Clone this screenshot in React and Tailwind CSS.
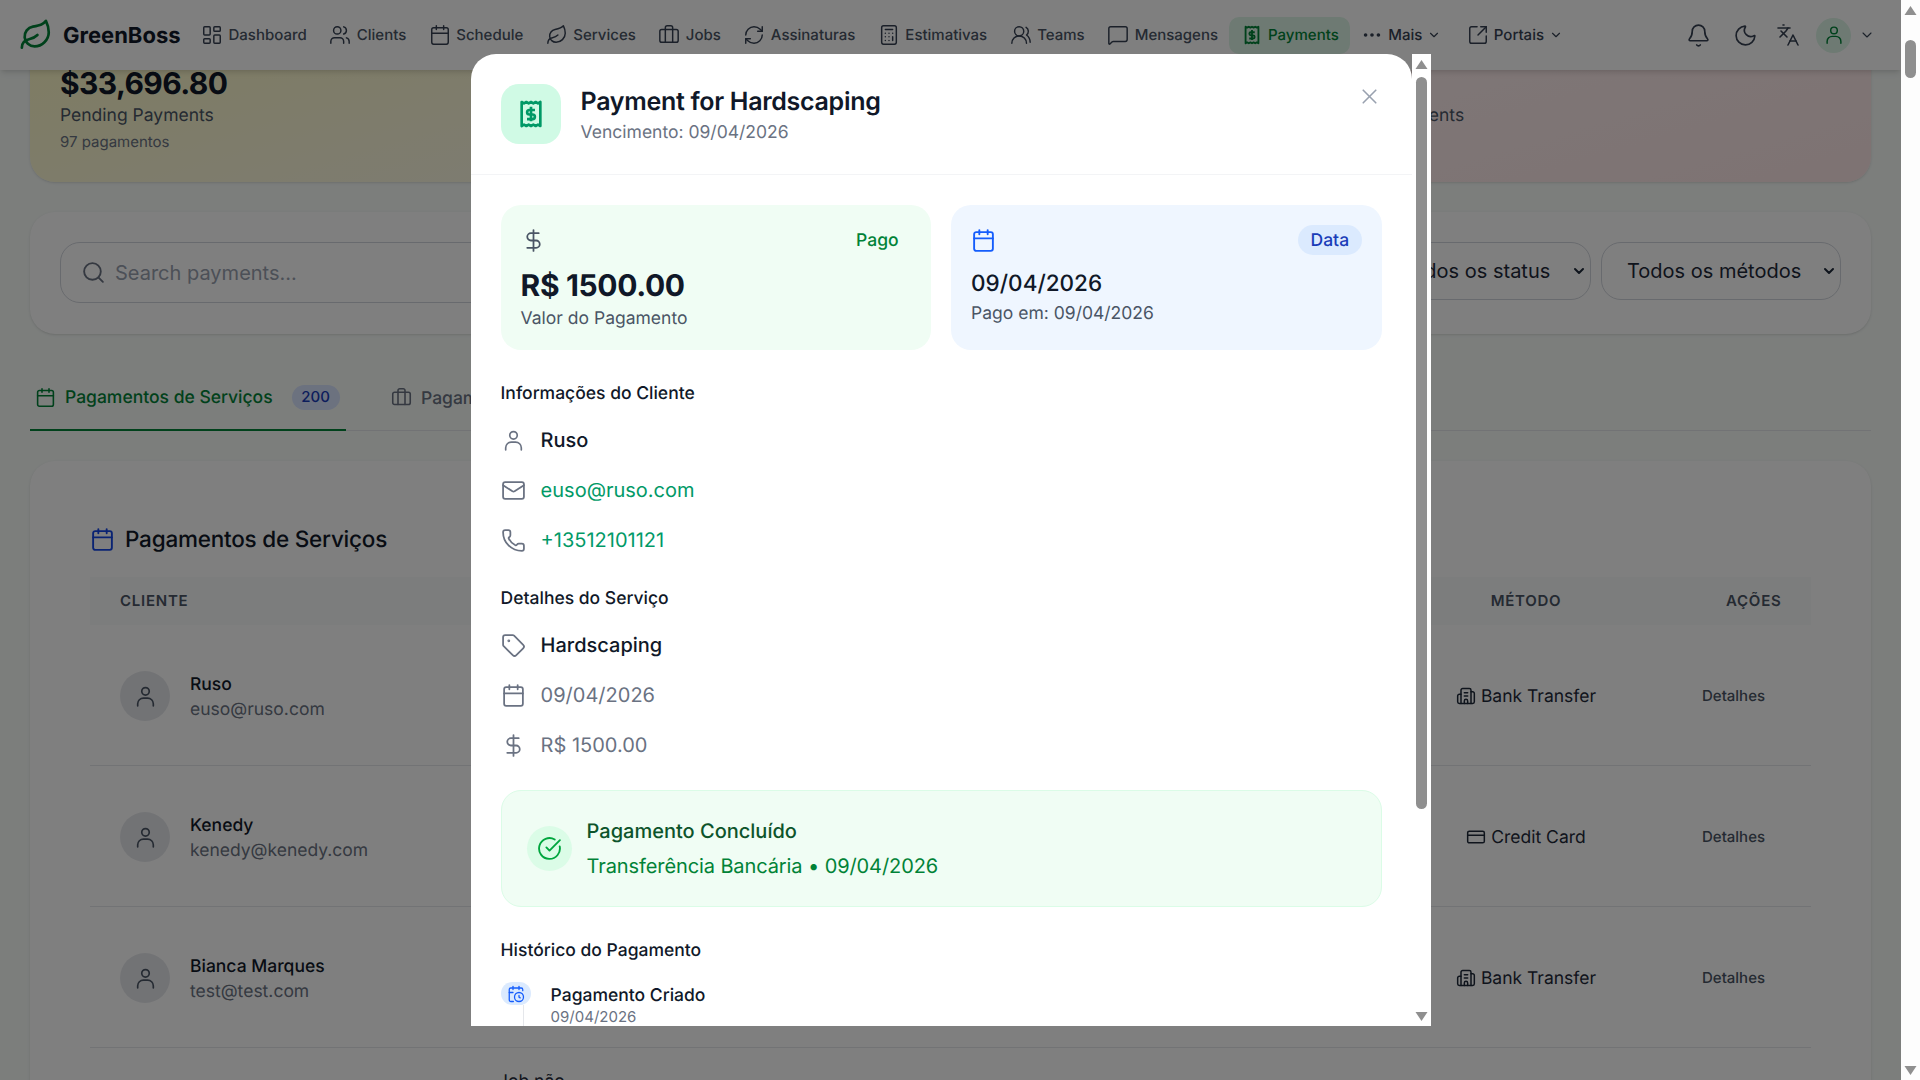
import React from "react";
import {
  Bell,
  Briefcase,
  Building2,
  Calculator,
  Calendar,
  CalendarClock,
  ChevronDown,
  CircleCheckBig,
  CreditCard,
  DollarSign,
  Ellipsis,
  Languages,
  LayoutDashboard,
  Leaf,
  Mail,
  MessageSquare,
  Moon,
  Phone,
  RefreshCw,
  Search,
  SquareArrowOutUpRight,
  Tag,
  Users,
  UsersRound,
  X,
} from "lucide-react";

const PersonIcon = ({ className }) => (
  <svg viewBox="0 0 24 24" fill="none" stroke="currentColor" strokeWidth="1.6" strokeLinecap="round" className={className}>
    <circle cx="12" cy="7" r="3.6" />
    <path d="M4.5 21v-2a5.5 5.5 0 0 1 5.5-5.5h4a5.5 5.5 0 0 1 5.5 5.5v2" />
  </svg>
);

const ReceiptIcon = ({ className }) => (
  <svg viewBox="0 0 24 24" fill="none" stroke="currentColor" className={className}>
    <path
      strokeWidth="2"
      strokeLinejoin="round"
      d="M5 3l1.75 1L8.5 3l1.75 1L12 3l1.75 1L15.5 3l1.75 1L19 3v18l-1.75-1-1.75 1-1.75-1L12 21l-1.75-1-1.75 1-1.75-1L5 21z"
    />
    <path strokeWidth="2" d="M12 6.5v11M15 9h-4.2a1.7 1.7 0 0 0 0 3.4h2.4a1.7 1.7 0 0 1 0 3.4H9" />
  </svg>
);

const navItems = [
  { label: "Dashboard", Icon: LayoutDashboard },
  { label: "Clients", Icon: Users },
  { label: "Schedule", Icon: Calendar },
  { label: "Services", Icon: Leaf },
  { label: "Jobs", Icon: Briefcase },
  { label: "Assinaturas", Icon: RefreshCw },
  { label: "Estimativas", Icon: Calculator },
  { label: "Teams", Icon: UsersRound },
  { label: "Mensagens", Icon: MessageSquare },
];

const rows = [
  { name: "Ruso", email: "euso@ruso.com", method: "Bank Transfer", Icon: Building2 },
  { name: "Kenedy", email: "kenedy@kenedy.com", method: "Credit Card", Icon: CreditCard },
  { name: "Bianca Marques", email: "test@test.com", method: "Bank Transfer", Icon: Building2 },
];

const Navbar = () => (
  <header className="relative z-10 flex h-[70px] items-center bg-white pl-[19px] shadow-md">
    <Leaf className="h-[34px] w-[34px] text-green-700" strokeWidth={1.9} />
    <span className="ml-[10px] mr-[9.25px] pt-[2px] text-[22px] font-bold text-gray-900">GreenBoss</span>
    <nav className="flex items-center">
      {navItems.map(({ label, Icon }) => (
        <a key={label} className="flex h-[37px] items-center gap-[5.5px] px-[11.25px] text-[15px] font-medium text-gray-600">
          <Icon className="h-[22px] w-[22px] text-gray-700" strokeWidth={1.6} />
          {label}
        </a>
      ))}
      <a className="flex h-[37px] items-center gap-[5.5px] rounded-[10px] bg-[#dcf5e6] px-[11.25px] text-[15px] font-medium text-green-700">
        <ReceiptIcon className="h-[22px] w-[22px]" />
        Payments
      </a>
      <a className="flex h-[37px] items-center gap-[5px] px-[11.25px] text-[15px] font-medium text-gray-700">
        <Ellipsis className="h-[22px] w-[22px]" strokeWidth={2} />
        Mais
        <ChevronDown className="h-[14px] w-[14px]" />
      </a>
      <a className="ml-[3px] flex h-[37px] items-center gap-[5px] px-[11.25px] text-[15px] font-medium text-gray-700">
        <SquareArrowOutUpRight className="h-[22px] w-[22px]" strokeWidth={1.6} />
        Portais
        <ChevronDown className="h-[14px] w-[14px]" />
      </a>
    </nav>
    <div className="ml-auto flex items-center pr-[26px] text-gray-700">
      <Bell className="h-[25px] w-[25px]" strokeWidth={1.6} />
      <Moon className="ml-[22px] h-[25px] w-[25px]" strokeWidth={1.6} />
      <Languages className="ml-[18.5px] h-[24px] w-[24px]" strokeWidth={1.6} />
      <span className="ml-[16px] flex h-[35px] w-[35px] items-center justify-center rounded-full bg-[#dcf5e6] text-green-700">
        <PersonIcon className="h-[22px] w-[22px]" />
      </span>
      <ChevronDown className="ml-[8px] h-[16px] w-[16px]" strokeWidth={1.6} />
    </div>
  </header>
);

const StatCard = ({ value, label, note, tone }) => (
  <div className={`flex h-[172px] flex-col justify-end rounded-[25px] px-[30px] pb-[29px] shadow-sm ${tone}`}>
    <div className="text-[30px] font-bold leading-[36px] tracking-[-0.6px] text-gray-900">{value}</div>
    <div className="mt-[1px] text-[17.5px] leading-[26px] text-gray-600">{label}</div>
    <div className="mt-[2px] text-[15px] leading-[22px] text-gray-500">{note}</div>
  </div>
);

const PaymentsTable = () => (
  <section className="mt-[30px] rounded-[25px] bg-white px-[60px] pt-[64px] shadow-sm">
    <div className="flex items-center gap-[10px]">
      <Calendar className="-mt-[1px] h-[25px] w-[25px] text-blue-700" strokeWidth={1.8} />
      <h2 className="text-[22.5px] font-medium leading-[30px] tracking-[-0.22px] text-gray-900">Pagamentos de Serviços</h2>
    </div>
    <div className="mt-[22px] grid h-[48px] grid-cols-[380px_1fr_222px_174px] items-center bg-gray-50 text-[15px] font-semibold tracking-wider text-gray-600">
      <span className="pl-[30px]">CLIENTE</span>
      <span />
      <span className="text-center">MÉTODO</span>
      <span className="pl-[89px]">AÇÕES</span>
    </div>
    {rows.map(({ name, email, method, Icon }) => (
      <div key={name} className="grid h-[141px] grid-cols-[380px_1fr_222px_174px] items-center border-b border-gray-200 pt-[2px]">
        <div className="flex items-center gap-[20px] pl-[30px]">
          <span className="flex h-[50px] w-[50px] items-center justify-center rounded-full bg-gray-200 text-gray-600">
            <PersonIcon className="h-[25px] w-[25px]" />
          </span>
          <div className="pt-[2px] text-[17.5px] leading-[25px]">
            <div className="font-medium text-gray-900">{name}</div>
            <div className="text-gray-500">{email}</div>
          </div>
        </div>
        <span />
        <div className="flex items-center justify-center gap-[5px] pt-[2px] text-[17.5px] text-gray-800">
          <Icon className="-mt-[2px] h-5 w-5" strokeWidth={1.8} />
          {method}
        </div>
        <span className="pl-[65px] text-[15px] font-medium text-gray-600">Detalhes</span>
      </div>
    ))}
    <div className="grid h-[141px] grid-cols-[380px_1fr_222px_174px]">
      <span />
      <span className="mt-[21px] pl-[28px] text-[17.5px] text-gray-800">Job não</span>
    </div>
  </section>
);

const FilterSelect = ({ label, className }) => (
  <div className="relative">
    <select
      defaultValue="all"
      className={`h-[58px] appearance-none rounded-[20px] border border-gray-300 pr-[12px] text-[20px] text-gray-800 ${className}`}
    >
      <option value="all">{label}</option>
    </select>
    <ChevronDown className="pointer-events-none absolute right-[4px] top-[21px] h-[16px] w-[16px] text-gray-800" strokeWidth={3} />
  </div>
);

const Backdrop = () => (
  <main className="-mt-[60px] px-[30px]">
    <div className="grid grid-cols-3 gap-[30px]">
      <StatCard value="$33,696.80" label="Pending Payments" note="97 pagamentos" tone="bg-gradient-to-br from-yellow-100 to-[#fbf8e6]" />
      <StatCard value="$21,340.00" label="Paid Payments" note="103 pagamentos" tone="bg-gradient-to-br from-green-50 to-green-100" />
      <StatCard value="$0.00" label="Overdue Payments" note="0 pagamentos" tone="bg-gradient-to-br from-[#fdf0f0] to-[#fde6e6]" />
    </div>

    <div className="mt-[30px] flex h-[122px] items-start gap-[10px] rounded-[25px] bg-white px-[30px] pt-[30px] shadow-sm">
      <div className="flex h-[61px] flex-1 items-center gap-[9px] rounded-[20px] border border-gray-300 pl-[20px]">
        <Search className="h-[25px] w-[25px] text-gray-500" strokeWidth={1.8} />
        <input
          placeholder="Search payments..."
          className="flex-1 bg-transparent text-[20px] outline-none placeholder:text-gray-400"
        />
      </div>
      <FilterSelect label="Todos os status" className="w-[214px] pl-[23px]" />
      <FilterSelect label="Todos os métodos" className="w-[240px] pl-[25px]" />
    </div>

    <div className="mt-[30px] flex h-[67px] border-b border-gray-200">
      <div className="-mb-px flex w-[316px] items-center gap-[9px] border-b-[2.5px] border-green-700 pl-[5px] pt-[4px] text-[17.5px] font-medium text-green-700">
        <Calendar className="-mt-[3px] h-[21px] w-[21px]" strokeWidth={1.8} />
        Pagamentos de Serviços
        <span className="-mt-[2px] ml-[10px] flex h-[25px] w-[48px] items-center justify-center rounded-full bg-[#d8e4ff] text-[15px] text-blue-800">200</span>
      </div>
      <div className="ml-[45px] flex items-center gap-[9px] pt-[4px] text-[17.5px] font-medium text-gray-500">
        <Briefcase className="-mt-[3px] h-[21px] w-[21px]" strokeWidth={1.8} />
        Pagamentos de Jobs
      </div>
    </div>

    <PaymentsTable />
  </main>
);

const SectionTitle = ({ children, className }) => (
  <h3 className={`text-[17.5px] font-medium leading-[26px] text-gray-900 ${className}`}>{children}</h3>
);

const InfoRow = ({ Icon, text, tone }) => (
  <div className={`flex h-[30px] items-center gap-[15px] text-[20px] ${tone}`}>
    <Icon className="h-[25px] w-[25px] shrink-0 text-gray-500" strokeWidth={1.7} />
    {text}
  </div>
);

const ScrollArrow = ({ down, className }) => (
  <svg viewBox="0 0 12 10" className={`fill-[#8f8f8f] ${className}`}>
    <polygon points={down ? "0,1 12,1 6,10" : "0,9 12,9 6,0"} />
  </svg>
);

const PaymentModal = () => (
  <div className="absolute left-[470.6px] top-[54px] flex h-[972px] w-[960px] overflow-hidden">
    <div className="w-[941px] rounded-t-[25px] bg-white">
      <div className="flex h-[121px] items-center gap-[20px] border-b border-gray-100 px-[30px]">
        <span className="flex h-[60px] w-[60px] items-center justify-center rounded-[18px] bg-emerald-100 text-emerald-600">
          <ReceiptIcon className="h-[32px] w-[32px]" />
        </span>
        <div className="pt-[2px]">
          <div className="text-[25px] font-semibold leading-[34px] tracking-[-0.3px] text-gray-900">Payment for Hardscaping</div>
          <div className="mt-[1px] text-[17.5px] leading-[26px] text-gray-500">Vencimento: 09/04/2026</div>
        </div>
        <X className="ml-auto mt-[30px] h-[25px] w-[25px] self-start text-gray-400" strokeWidth={1.6} />
      </div>

      <div className="px-[30px] pt-[30px]">
        <div className="grid grid-cols-2 gap-[20px]">
          <div className="h-[145px] rounded-[20px] bg-green-50 p-[20px]">
            <div className="flex h-[30px] items-center justify-between">
              <DollarSign className="h-[25px] w-[25px] text-gray-600" strokeWidth={1.7} />
              <span className="px-[12.5px] pt-[3px] text-[17.5px] font-medium text-green-700">Pago</span>
            </div>
            <div className="mt-[11px] text-[30px] font-bold leading-[40px] tracking-[-0.37px] text-gray-900">R$ 1500.00</div>
            <div className="text-[17.5px] leading-[26px] text-gray-600">Valor do Pagamento</div>
          </div>
          <div className="h-[145px] rounded-[20px] bg-blue-50 p-[20px]">
            <div className="flex h-[30px] items-center justify-between">
              <Calendar className="h-[25px] w-[25px] text-blue-600" strokeWidth={1.8} />
              <span className="flex h-[30px] items-center rounded-full bg-blue-100 px-[12.5px] pt-[3px] text-[17.5px] font-medium text-blue-800">Data</span>
            </div>
            <div className="mt-[14px] text-[22.5px] font-medium leading-[30px] text-gray-900">09/04/2026</div>
            <div className="mt-[2px] text-[17.5px] leading-[26px] text-gray-600">Pago em: 09/04/2026</div>
          </div>
        </div>

        <SectionTitle className="mt-[31px]">Informações do Cliente</SectionTitle>
        <div className="mt-[18px] flex flex-col gap-[20px]">
          <InfoRow Icon={PersonIcon} text="Ruso" tone="font-medium text-gray-900" />
          <InfoRow Icon={Mail} text="euso@ruso.com" tone="text-emerald-600" />
          <InfoRow Icon={Phone} text="+13512101121" tone="text-emerald-600" />
        </div>

        <SectionTitle className="mt-[31px]">Detalhes do Serviço</SectionTitle>
        <div className="mt-[18px] flex flex-col gap-[20px]">
          <InfoRow Icon={Tag} text="Hardscaping" tone="font-medium text-gray-900" />
          <InfoRow Icon={Calendar} text="09/04/2026" tone="text-gray-500" />
          <InfoRow Icon={DollarSign} text="R$ 1500.00" tone="text-gray-500" />
        </div>

        <div className="mt-[30px] flex h-[117px] items-center gap-[15px] rounded-[20px] border border-green-100 bg-green-50 pl-[25px]">
          <span className="flex h-[45px] w-[45px] items-center justify-center rounded-full bg-green-100 text-green-600">
            <CircleCheckBig className="h-[25px] w-[25px]" strokeWidth={1.8} />
          </span>
          <div>
            <div className="text-[20px] font-medium leading-[30px] text-green-900">Pagamento Concluído</div>
            <div className="mt-[5px] text-[20px] leading-[30px] tracking-[-0.1px] text-green-700">Transferência Bancária • 09/04/2026</div>
          </div>
        </div>

        <SectionTitle className="mt-[31px]">Histórico do Pagamento</SectionTitle>
        <div className="mt-[18px] flex gap-[20px]">
          <div className="w-[30px]">
            <span className="flex h-[23px] w-[30px] items-center justify-center rounded-full bg-blue-100 text-blue-600">
              <CalendarClock className="h-[18px] w-[18px]" strokeWidth={1.7} />
            </span>
            <div className="ml-[22px] h-[40px] w-px bg-gray-200" />
          </div>
          <div className="pt-[1px]">
            <div className="text-[17.5px] font-medium leading-[26px] text-gray-900">Pagamento Criado</div>
            <div className="-mt-[1px] text-[15px] leading-[18px] text-gray-500">09/04/2026</div>
          </div>
        </div>
      </div>
    </div>

    <div className="relative w-[19px] bg-white">
      <ScrollArrow className="absolute left-[3px] top-[6px] h-[10px] w-[13px]" />
      <div className="absolute left-[4px] top-[23px] h-[732px] w-[11px] rounded-full bg-[#8f8f8f]" />
      <ScrollArrow down className="absolute bottom-[5px] left-[3px] h-[10px] w-[13px]" />
    </div>
  </div>
);

export default function App() {
  return (
    <div className="relative h-screen overflow-hidden bg-[#f8fcf9] pr-[19px] [font-family:Inter,sans-serif] [text-rendering:geometricPrecision]">
      <Navbar />
      <Backdrop />

      <div className="absolute inset-y-0 left-0 right-[19px] z-20 bg-black/50" />
      <div className="absolute inset-0 z-30">
        <PaymentModal />
      </div>

      <div className="absolute inset-y-0 right-0 z-30 w-[19px] bg-[#fdfdfd]">
        <ScrollArrow className="absolute left-[3px] top-[6px] h-[10px] w-[13px]" />
        <div className="absolute left-[4px] top-[40px] h-[38px] w-[11px] rounded-full bg-[#8f8f8f]" />
        <ScrollArrow down className="absolute bottom-[5px] left-[3px] h-[10px] w-[13px]" />
      </div>
    </div>
  );
}
